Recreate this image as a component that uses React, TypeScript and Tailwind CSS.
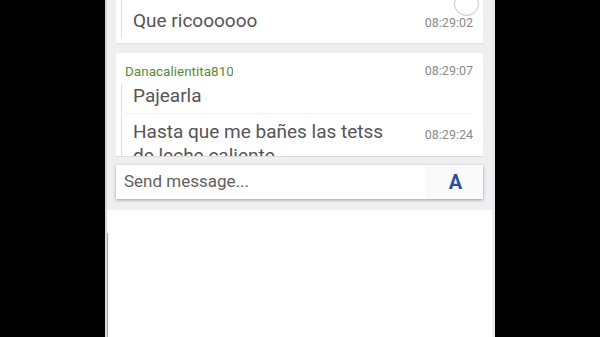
export default function App() {
  return (
    <div className="w-[600px] h-[337px] bg-black flex justify-center overflow-hidden" style={{ fontFamily: 'Roboto, "Noto Sans", sans-serif' }}>
      <div className="w-[390px] h-full bg-white flex flex-col border-l-2 border-r-[3px] border-l-[#d9d9d9] border-r-[#ececec]">
        <div className="bg-[#efeef1] px-[9px] pb-[11px] flex flex-col">
          <div className="h-[157px] overflow-hidden flex flex-col border-b border-[#dcdcdc]">
            {/* last visible card, scrolled up */}
            <div className="relative bg-white h-[43px] shrink-0 pl-[5px] pr-[10px] shadow-[0_1px_1px_rgba(0,0,0,0.06)]">
              <div className="absolute right-[4px] top-[-9px] w-[25px] h-[25px] rounded-full border border-[#c4c4c4] bg-white" />
              <div className="h-[38px] border-l border-[#dddddd] pl-[11px] flex items-center justify-between">
                <span className="text-[19px] text-[#555] mt-[4px]">Que ricoooooo</span>
                <span className="text-[12.5px] text-[#8a8a8a] mt-[8px]">08:29:02</span>
              </div>
            </div>
            <div className="h-[10px] shrink-0" />
            <div className="bg-white shrink-0 pl-[5px] pr-[10px] pt-[9px]">
              <div className="flex items-center justify-between pl-[4px] h-[18px]">
                <span className="text-[13.5px] text-[#5a8a3a] w-[108px] overflow-hidden whitespace-nowrap">Danacalientita8109</span>
                <span className="text-[12.5px] text-[#8a8a8a]">08:29:07</span>
              </div>
              <div className="border-l border-[#dddddd] pl-[11px] mt-[4px] h-[30px] flex items-start border-b border-b-[#f3f3f3]">
                <span className="text-[19px] text-[#555] leading-[24px]">Pajearla</span>
              </div>
              <div className="border-l border-[#dddddd] pl-[11px] pt-[6px] flex justify-between">
                <span className="text-[19px] text-[#555] leading-[24px] w-[262px]">Hasta que me bañes las tetss de leche caliente</span>
                <span className="text-[12.5px] text-[#8a8a8a] mt-[6px]">08:29:24</span>
              </div>
            </div>
          </div>
          <div className="mt-[8px] h-[34px] bg-white flex shadow-[0_1px_3px_rgba(0,0,0,0.35)]">
            <div className="flex-1 flex items-center pl-[8px] text-[17px] text-[#606060]">Send message...</div>
            <div className="w-[58px] bg-[#fafafa] flex items-center justify-center pl-[3px]">
              <span className="text-[20px] font-bold text-[#2c4e9e] leading-none">A</span>
            </div>
          </div>
        </div>
        <div className="flex-1 bg-white pt-[23px]">
          <div className="h-full border-l border-[#a8a8a8]" />
        </div>
      </div>
    </div>
  );
}
